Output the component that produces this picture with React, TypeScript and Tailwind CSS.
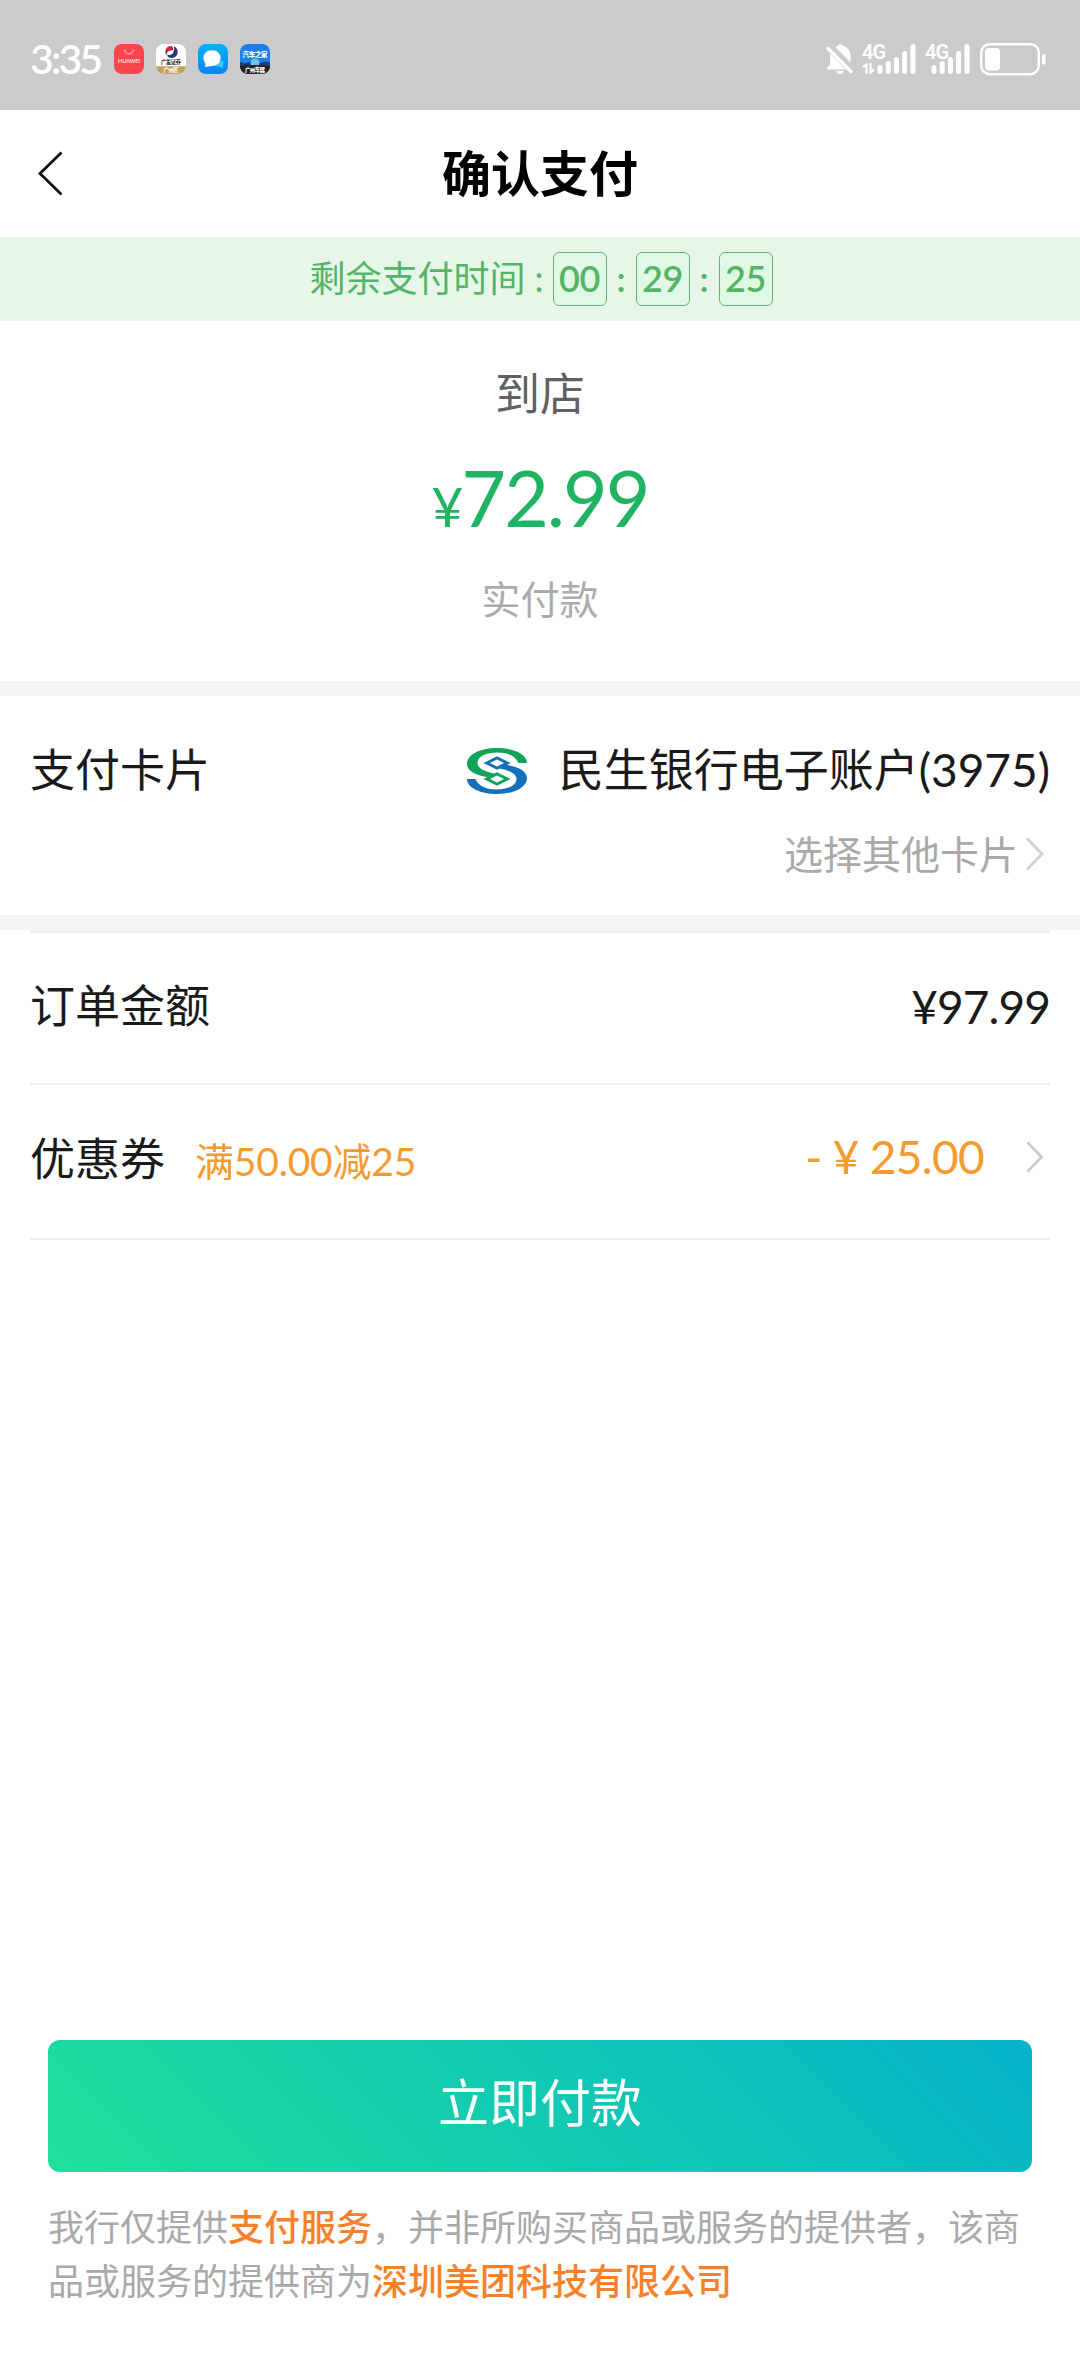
import React from 'react';

const SignalBars: React.FC = () => (
  <svg width="40" height="30" viewBox="0 0 40 30" stroke="#fff" strokeWidth="5" strokeLinecap="round">
    <path d="M3 23.5V27.5M11.2 19.5V27.5M19.4 15.5V27.5M27.6 9.5V27.5M36 2.5V27.5" />
  </svg>
);

const BellOffIcon: React.FC = () => (
  <svg width="28" height="32" viewBox="0 0 28 32" fill="#fff">
    <path d="M9.5 4.2C10.8 3 12 2.4 12.2 2.2C12.6 .9 15.6 .9 16 2.2C21 3.6 24.6 7.4 24.6 13V19.4Z" />
    <path d="M4 10.5L20 26.5H1V24.6L4.2 21.5Z" />
    <path d="M10 28H18C17.4 30 16 31 14 31S10.6 30 10 28Z" />
    <path d="M2 5.5L25 28.5" stroke="#fff" strokeWidth="3.4" strokeLinecap="round" />
  </svg>
);

const BatteryIcon: React.FC = () => (
  <svg width="66" height="34" viewBox="0 0 66 34" fill="none">
    <rect x="1.2" y="2.2" width="57.6" height="30" rx="8.5" stroke="#fff" strokeWidth="2.4" />
    <rect x="5" y="6" width="15" height="22.5" rx="4" fill="#fff" />
    <rect x="62" y="12" width="3.5" height="10.5" rx="1.5" fill="#fff" />
  </svg>
);

// Notification app icons in the status bar
const AppIcons: React.FC = () => (
  <div className="flex gap-3">
    <svg width="30" height="30" viewBox="0 0 30 30">
      <rect width="30" height="30" rx="8" fill="#fb444c" />
      <path d="M10.5 5.5C11 11.5 19 11.5 19.5 5.5" fill="none" stroke="#fff" strokeOpacity=".75" strokeWidth="1" />
      <text x="15" y="19.2" textAnchor="middle" fontSize="5.6" fontWeight="700" textLength="22" fill="#fff" fillOpacity=".85">HUAWEI</text>
    </svg>
    <svg width="30" height="30" viewBox="0 0 30 30">
      <defs>
        <clipPath id="roundA"><rect width="30" height="30" rx="8" /></clipPath>
      </defs>
      <g clipPath="url(#roundA)">
        <rect width="30" height="30" fill="#fff" />
        <rect y="22.3" width="30" height="8" fill="#c3a062" />
        <path d="M14 2A6 6 0 0 0 10.5 11.5C10.5 8 13 6 17 6.5C18 4 16.5 2 14 2Z" fill="#c8283c" />
        <path d="M17.5 2.3A6 6 0 0 1 14 13.8C11.5 13.5 11 11.5 11.5 10.5C14 12 17.5 10 17.5 7.5C18.5 5.5 18.5 4 17.5 2.3Z" fill="#223a7c" />
        <text x="15" y="19.8" textAnchor="middle" fontSize="5.5" fontWeight="700" textLength="20" fill="#333">广发证券</text>
        <text x="15" y="28" textAnchor="middle" fontSize="5.5" fontWeight="700" textLength="15" fill="#fff">广州区</text>
      </g>
    </svg>
    <svg width="30" height="30" viewBox="0 0 30 30">
      <defs>
        <linearGradient id="chat" x1="0" y1="0" x2="0" y2="1">
          <stop offset="0" stopColor="#06b0f8" />
          <stop offset="1" stopColor="#0a86f5" />
        </linearGradient>
      </defs>
      <rect width="30" height="30" rx="8" fill="url(#chat)" />
      <path d="M21 17H25.5C25.5 20 24.8 21.5 25 24.5L21.5 22.5L17 22Z" fill="#45c4fb" />
      <path d="M14 6.2C19.3 6.2 22.6 9.7 22.6 14S19.3 22 14 22L7 23L7.6 19.5C6.2 18.2 5.4 16.3 5.4 14C5.4 9.7 8.7 6.2 14 6.2Z" fill="#fff" />
    </svg>
    <svg width="30" height="30" viewBox="0 0 30 30">
      <defs>
        <clipPath id="roundB"><rect width="30" height="30" rx="8" /></clipPath>
      </defs>
      <g clipPath="url(#roundB)">
        <rect width="30" height="30" fill="#1f7fea" />
        <path d="M0 18L5 19.5L9 18L20 19L24 17.5L30 18.5V24H0Z" fill="#1d3f78" />
        <circle cx="15" cy="19" r="4.5" fill="#62c6f5" />
        <path d="M0 22C10 20.5 20 20.5 30 22V30H0Z" fill="#2a2020" />
        <text x="15" y="12.5" textAnchor="middle" fontSize="6.5" fontWeight="900" textLength="25" fill="#fff">汽车之家</text>
        <text x="15" y="28.3" textAnchor="middle" fontSize="5.5" fontWeight="900" textLength="20" fill="#fff">广州车展</text>
      </g>
    </svg>
  </div>
);

const StatusBar: React.FC = () => (
  <header className="flex h-[110px] items-center justify-between bg-[#cbcbcb] pr-[34px] pl-[30px] text-white">
    <div className="flex items-center pt-2">
      <span className="w-[84px] text-[41px] leading-[30px] font-semibold tracking-[-0.07em]">3:35</span>
      <AppIcons />
    </div>
    <div className="flex h-8 items-center pt-2">
      <BellOffIcon />
      <div className="ml-2 flex">
        <div className="flex h-[30px] w-[15px] flex-col justify-between">
          <span className="font-['Roboto'] text-[20px] leading-[16px] font-semibold tracking-tighter">4G</span>
          <svg width="13" height="11" viewBox="0 0 13 11" fill="none" stroke="#fff" strokeWidth="2.2">
            <path d="M1 4L4.5 1.5V11M8.5 0V9.5L12 6.5" />
          </svg>
        </div>
        <SignalBars />
      </div>
      <div className="ml-2 flex">
        <span className="h-[30px] w-[6px] font-['Roboto'] text-[20px] leading-[16px] font-semibold tracking-tighter">4G</span>
        <SignalBars />
      </div>
      <div className="ml-[9px]">
        <BatteryIcon />
      </div>
    </div>
  </header>
);

const Chevron: React.FC<{ className?: string }> = ({ className }) => (
  <svg className={className} viewBox="0 0 20 34" fill="none" stroke="currentColor" strokeWidth="2.8">
    <path d="M2 1.5L17 17L2 32.5" />
  </svg>
);

const BankLogo: React.FC = () => {
  const half =
    'M60 15C60 6 46 0 30 0C12 0 0 7 0 16C0 23 9 27.5 20 29L16.5 31L30 37.7L43.5 31L30 24.3L27.5 25.5C17 23.5 10.5 20 10.5 15C10.5 8.500 19 4.500 31 4.500C42 4.500 49 9 51.500 15ZM23 31L30 27.600L37 31L30 34.400Z';
  return (
    <svg className="mt-[2px]" width="60" height="46" viewBox="0 0 60 46" fillRule="evenodd">
      <path d={half} fill="#0fa35c" />
      <path d={half} fill="#1470b8" transform="rotate(180 30 23)" />
    </svg>
  );
};

const TimeBox: React.FC<{ value: string }> = ({ value }) => (
  <span className="flex h-[54px] w-[54px] items-center justify-center rounded-md border border-[#63b577] bg-[#e0f9e5] pb-[3px] text-[36px] font-semibold tracking-[-0.01em]">
    {value}
  </span>
);

const App: React.FC = () => {
  return (
    <div className="flex h-[2376px] w-[1080px] flex-col bg-white font-['Lato','Noto_Sans_CJK_SC',sans-serif] text-[#1a1a1a]">
      <StatusBar />

      {/* Title bar */}
      <nav className="grid h-[127px] grid-cols-3 items-center">
        <svg className="ml-9" width="28" height="46" viewBox="0 0 28 46" fill="none" stroke="#111" strokeWidth="2.8">
          <path d="M25.5 1.5L4 22.5L25.5 43.5" />
        </svg>
        <h1 className="text-center text-[49px] leading-none font-bold text-black">确认支付</h1>
      </nav>

      {/* Countdown */}
      <div className="flex h-[84px] items-center justify-center bg-[#e6f7e9] pl-[2px] text-[36px] text-[#54b467]">
        <span className="mr-[9px] pb-[3px]">剩余支付时间 :</span>
        <TimeBox value="00" />
        <span className="w-[29px] pb-[3px] text-center font-semibold">:</span>
        <TimeBox value="29" />
        <span className="w-[29px] pb-[3px] text-center font-semibold">:</span>
        <TimeBox value="25" />
      </div>

      {/* Amount to pay */}
      <section className="flex h-[360px] flex-col items-center pt-[46px]">
        <p className="text-[45px] leading-[54px] text-[#606065]">到店</p>
        <p className="mt-[34px] text-[77px] leading-[84px] tracking-[-0.025em] text-[#21b364]">
          <span className="text-[55px]">¥</span>72.99
        </p>
        <p className="mt-[28px] text-[39px] leading-[46px] text-[#ababab]">实付款</p>
      </section>

      <div className="h-[15px] bg-[#f4f4f4]" />

      {/* Card */}
      <section className="flex h-[219px] flex-col px-[30px] pt-[46px]">
        <div className="flex items-center justify-between text-[45px] leading-[56px]">
          <span>支付卡片</span>
          <div className="flex items-center">
            <BankLogo />
            <span className="ml-8 text-[45px]">
              民生银行电子账户<span className="text-[46px]">(3975)</span>
            </span>
          </div>
        </div>
        <div className="mt-[33px] flex items-center justify-end text-[39px] leading-[46px] text-[#a9a9a9]">
          选择其他卡片
          <Chevron className="mr-[5px] ml-[7px] h-[34px] w-5 text-[#ccd2d9]" />
        </div>
      </section>

      <div className="h-[15px] bg-[#f4f4f4]" />

      {/* Order rows */}
      <section className="mx-[30px] text-[45px]">
        <div className="h-[3px] border-b-2 border-[#ececec] bg-[#f4f4f4]" />
        <div className="flex h-[152px] items-center justify-between border-b-2 border-[#efefef] pb-[3px]">
          <span>订单金额</span>
          <span className="text-[46px] tracking-[-0.02em]">¥97.99</span>
        </div>
        <div className="flex h-[155px] items-center border-b-2 border-[#efefef] pb-[3px]">
          <span>优惠券</span>
          <span className="mt-[3px] ml-[30px] text-[39px] tracking-[-0.005em] text-[#f39a30]">满50.00减25</span>
          <span className="mb-2 ml-auto text-[46px] tracking-[-0.015em] text-[#f39a30]">- ¥ 25.00</span>
          <Chevron className="mr-[5px] mb-[6px] ml-[41px] h-8 w-5 text-[#c8c8c8]" />
        </div>
      </section>

      {/* Pay button and disclaimer */}
      <footer className="mt-auto h-[336px] px-12">
        <button className="h-[132px] w-full rounded-xl bg-[linear-gradient(45deg,#1fe09a,#06b3ca)] pb-[5px] text-[51px] text-white">
          立即付款
        </button>
        <p className="mt-[28px] text-[36px] leading-[54px] text-[#a9a9a9]">
          我行仅提供<b className="font-medium text-[#f5822a]">支付服务</b>，并非所购买商品或服务的提供者，该商
          <br />
          品或服务的提供商为<b className="font-medium text-[#f5822a]">深圳美团科技有限公司</b>
        </p>
      </footer>
    </div>
  );
};

export default App;
